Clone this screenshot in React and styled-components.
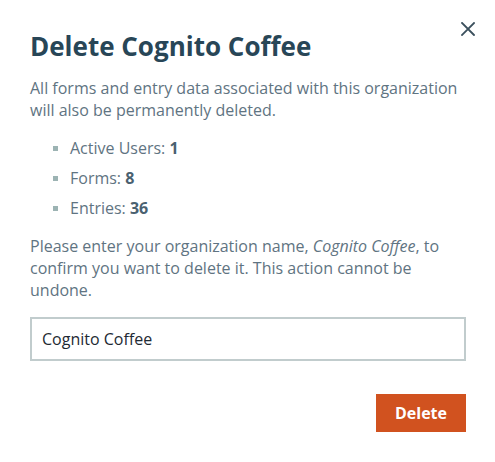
import React, { useState } from "react";
import styled, { createGlobalStyle } from "styled-components";

const GlobalStyle = createGlobalStyle`
  html, body {
    margin: 0;
    padding: 0;
    background: #ffffff;
  }
  body {
    font-family: "Open Sans", "Liberation Sans", sans-serif;
  }
  * {
    box-sizing: border-box;
  }
`;

const Dialog = styled.section`
  position: relative;
  width: 495px;
  height: 462px;
  padding: 30px 29px 30px 30px;
  background: #ffffff;
  display: flex;
  flex-direction: column;
`;

const CloseButton = styled.button`
  position: absolute;
  top: 20px;
  right: 19px;
  width: 17px;
  height: 17px;
  padding: 0;
  border: none;
  background: none;
  cursor: pointer;
  display: flex;
  align-items: center;
  justify-content: center;
`;

const Title = styled.h2`
  margin: 0;
  font-size: 26px;
  line-height: 33px;
  font-weight: 700;
  color: #284657;
`;

const Text = styled.p`
  margin: ${(p) => (p.$first ? "14px" : "16px")} 0 0;
  font-size: 16px;
  line-height: 22px;
  color: #5f7482;
  em {
    font-style: italic;
  }
`;

const Stats = styled.ul`
  list-style: none;
  margin: 16px 0 0;
  padding: 0 0 0 40px;
`;

const Stat = styled.li`
  position: relative;
  font-size: 16px;
  line-height: 22px;
  color: #5f7482;
  & + & {
    margin-top: 8px;
  }
  &::before {
    content: "";
    position: absolute;
    left: -17px;
    top: 9px;
    width: 5px;
    height: 5px;
    background: #9cb3b3;
  }
  b {
    font-weight: 700;
    color: #4a6170;
  }
`;

const NameInput = styled.input`
  margin-top: 16px;
  width: 100%;
  height: 44px;
  padding: 0 10px;
  border: 2px solid #c1cccd;
  border-radius: 0;
  outline: none;
  font-family: "Open Sans", "Liberation Sans", sans-serif;
  font-size: 16px;
  color: #1e2a33;
  background: #ffffff;
`;

const Actions = styled.div`
  margin-top: 33px;
  display: flex;
  justify-content: flex-end;
`;

const DeleteButton = styled.button`
  width: 90px;
  height: 38px;
  border: none;
  border-radius: 0;
  background: #d1521f;
  color: #ffffff;
  font-family: "Open Sans", "Liberation Sans", sans-serif;
  font-size: 16px;
  font-weight: 700;
  cursor: pointer;
`;

function App() {
  const [name, setName] = useState("Cognito Coffee");

  return (
    <>
      <GlobalStyle />
      <Dialog>
        <CloseButton aria-label="Close">
          <svg width="14" height="14" viewBox="0 0 14 14">
            <path
              d="M1 1 L13 13 M13 1 L1 13"
              stroke="#3b505d"
              strokeWidth="1.8"
              strokeLinecap="square"
            />
          </svg>
        </CloseButton>
        <Title>Delete Cognito Coffee</Title>
        <Text $first>
          All forms and entry data associated with this organization will also
          be permanently deleted.
        </Text>
        <Stats>
          <Stat>
            Active Users: <b>1</b>
          </Stat>
          <Stat>
            Forms: <b>8</b>
          </Stat>
          <Stat>
            Entries: <b>36</b>
          </Stat>
        </Stats>
        <Text>
          Please enter your organization name, <em>Cognito Coffee</em>, to
          confirm you want to delete it. This action cannot be undone.
        </Text>
        <NameInput value={name} onChange={(e) => setName(e.target.value)} />
        <Actions>
          <DeleteButton>Delete</DeleteButton>
        </Actions>
      </Dialog>
    </>
  );
}

export default App;
